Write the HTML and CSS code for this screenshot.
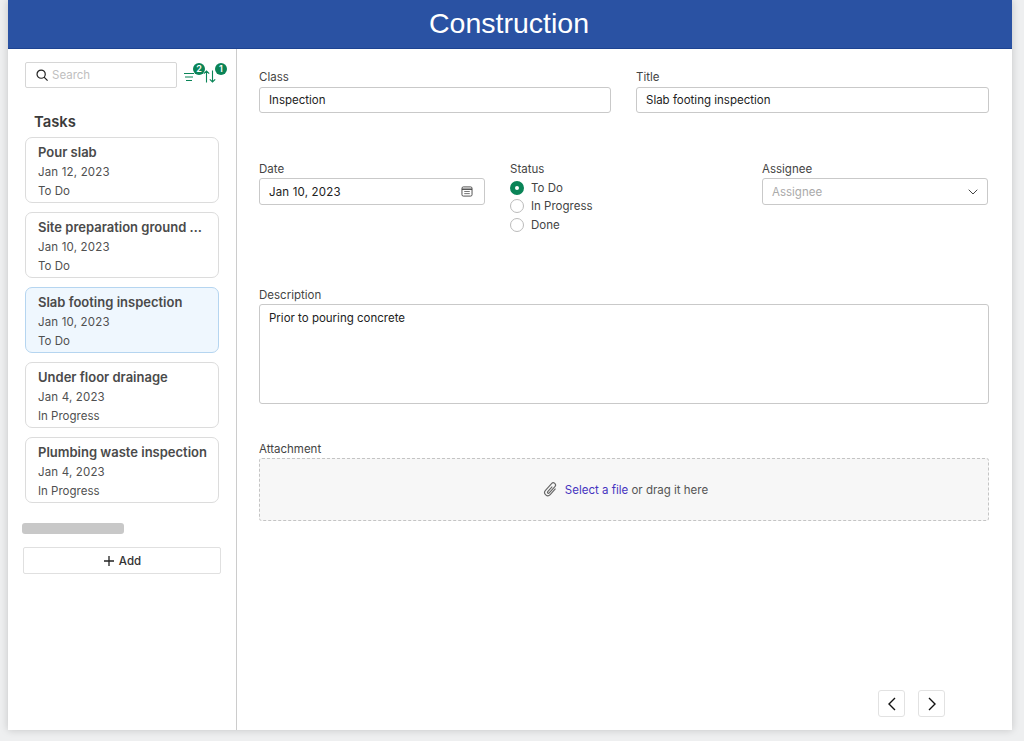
FILE: index.html
```html
<!DOCTYPE html>
<html lang="en">
  <head>
    <meta charset="UTF-8" />
    <title>Construction</title>
    <link rel="stylesheet" href="styles.css">
  </head>
  <body>
    <div class="app">
      <header class="topbar">Construction</header>
      <div class="content">
        <aside class="sidebar">
          <div class="toolbar">
            <div class="search">
              <svg width="12" height="12" viewBox="0 0 14 14" fill="none" stroke="#222" stroke-width="1.400"><circle cx="6" cy="6" r="4.800"/><path d="M9.400 9.400L13.500 13.500"/></svg>
              <span>Search</span>
            </div>
            <div class="tool">
              <svg width="10" height="8" viewBox="0 0 10 8" fill="none" stroke="#0a8457" stroke-width="1"><path d="M0 .5h10M1 4h8M2 7.500h6"/></svg>
              <b class="badge">2</b>
            </div>
            <div class="tool sort">
              <svg width="13" height="13" viewBox="0 0 13 13" fill="none" stroke="#0a8457" stroke-width="1.100"><path d="M3.500 12.500V1M.8 3.700L3.500 1l2.700 2.700M9.500.5V12M6.800 9.300L9.500 12l2.700-2.700"/></svg>
              <b class="badge">1</b>
            </div>
          </div>
          <h2>Tasks</h2>
          <div class="cards">
            <div class="card"><h3>Pour slab</h3><p>Jan 12, 2023</p><p>To Do</p></div>
            <div class="card"><h3>Site preparation ground works</h3><p>Jan 10, 2023</p><p>To Do</p></div>
            <div class="card active"><h3>Slab footing inspection</h3><p>Jan 10, 2023</p><p>To Do</p></div>
            <div class="card"><h3>Under floor drainage</h3><p>Jan 4, 2023</p><p>In Progress</p></div>
            <div class="card"><h3>Plumbing waste inspection</h3><p>Jan 4, 2023</p><p>In Progress</p></div>
          </div>
          <div class="scrollbar"></div>
          <button class="add">
            <svg width="12" height="12" viewBox="0 0 12 12" fill="none" stroke="#222" stroke-width="1.300"><path d="M6 1v10M1 6h10"/></svg>
            Add
          </button>
        </aside>
        <main class="form">
          <div class="row row-two">
            <div class="field"><label>Class</label><div class="input">Inspection</div></div>
            <div class="field"><label>Title</label><div class="input">Slab footing inspection</div></div>
          </div>
          <div class="row row-three">
            <div class="field">
              <label>Date</label>
              <div class="input spread date">
                Jan 10, 2023
                <svg width="12" height="11" viewBox="0 0 13 12" fill="none" stroke="#444"><rect x="1" y="1" width="11" height="10" rx="1.500"/><path d="M1 3.500h11" stroke-width="1.500"/><path d="M3.500 6h6M3.500 8.300h6" stroke-width=".8"/></svg>
              </div>
            </div>
            <div class="field">
              <label>Status</label>
              <div class="radios">
                <div class="radio checked"><i></i>To Do</div>
                <div class="radio"><i></i>In Progress</div>
                <div class="radio"><i></i>Done</div>
              </div>
            </div>
            <div class="field">
              <label>Assignee</label>
              <div class="input spread placeholder">
                Assignee
                <svg width="10" height="6" viewBox="0 0 10 6" fill="none" stroke="#444"><path d="M.7.7L5 5l4.300-4.300"/></svg>
              </div>
            </div>
          </div>
          <div class="field description">
            <label>Description</label>
            <div class="input textarea">Prior to pouring concrete</div>
          </div>
          <div class="field attachment">
            <label>Attachment</label>
            <div class="dropzone">
              <svg width="17" height="17" viewBox="0 0 15 15" fill="none" stroke="#666" stroke-width="1"><path transform="rotate(42 7.500 7.500)" d="M10.300 4v7a2.800 2.800 0 0 1-5.600 0V3a2 2 0 0 1 4 0v7.500a.9.9 0 0 1-1.800 0V4.500"/></svg>
              <span><a>Select a file</a> or drag it here</span>
            </div>
          </div>
          <div class="pager">
            <button><svg width="8" height="14" viewBox="0 0 8 14" fill="none" stroke="#111" stroke-width="1.400"><path d="M7 1L1 7l6 6"/></svg></button>
            <button><svg width="8" height="14" viewBox="0 0 8 14" fill="none" stroke="#111" stroke-width="1.400"><path d="M1 1l6 6-6 6"/></svg></button>
          </div>
        </main>
      </div>
    </div>
  </body>
</html>
```

FILE: styles.css
```css
body {
  margin: 0;
  background: #eeeff0;
  font-family: Inter, "Liberation Sans", sans-serif;
  font-size: 11.5px;
  color: #222;
  height: 741px;
  overflow: hidden;
}

.app {
  width: 1004px;
  height: 730px;
  margin-left: 8px;
  background: #fff;
  display: flex;
  flex-direction: column;
  box-shadow: 0 0 8px rgba(0, 0, 0, 0.18);
}

.topbar {
  height: 49px;
  background: #2a52a3;
  border-bottom: 1px solid #1d4391;
  box-sizing: border-box;
  color: #fff;
  font-family: "Liberation Sans", sans-serif;
  font-size: 28.500px;
  line-height: 47px;
  text-align: center;
  padding-right: 2px;
}

.content {
  flex: 1;
  display: flex;
}

.sidebar {
  width: 229px;
  box-sizing: border-box;
  border-right: 1px solid #ccc;
  padding: 13px 15px 0 14px;
}

.toolbar {
  display: flex;
  align-items: flex-start;
  padding-left: 3px;
}

.search {
  flex-shrink: 0;
  width: 152px;
  height: 26px;
  box-sizing: border-box;
  border: 1px solid #d6d6d6;
  border-radius: 2px;
  display: flex;
  align-items: center;
  gap: 4px;
  padding: 0 0 1px 10px;
  color: #c0c0c0;
}

.tool {
  position: relative;
  flex-shrink: 0;
  height: 26px;
  margin-left: 7px;
  display: flex;
  align-items: center;
}

.tool svg {
  margin-top: 3px;
}

.sort {
  margin-left: 9px;
}

.sort svg {
  margin-top: 2px;
}

.badge {
  position: absolute;
  top: 1px;
  left: 9px;
  width: 12px;
  height: 12px;
  border-radius: 50%;
  background: #0a8457;
  color: #fff;
  font-size: 9px;
  font-weight: 600;
  line-height: 12px;
  text-align: center;
}

.sort .badge {
  left: 12px;
}

.sidebar h2 {
  margin: 25px 0 5px 12px;
  font-size: 14.800px;
  line-height: 19px;
  font-weight: 600;
  color: #3b3b3b;
}

.cards {
  display: flex;
  flex-direction: column;
  gap: 9px;
  margin-left: 3px;
}

.card {
  width: 194px;
  height: 66px;
  box-sizing: border-box;
  border: 1px solid #dcdcdc;
  border-radius: 7px;
  padding: 6px 10px 6px 12px;
  color: #505050;
}

.card.active {
  background: #eff7fe;
  border-color: #b5d5f0;
}

.card h3 {
  margin: 0 0 3px;
  font-size: 13px;
  line-height: 17px;
  font-weight: 600;
  color: #4a4a4a;
  white-space: nowrap;
  overflow: hidden;
  text-overflow: ellipsis;
}

.card p {
  margin: 0 0 3px;
  line-height: 16px;
}

.card p:first-of-type,
.date {
  letter-spacing: 0.17px;
}

.scrollbar {
  width: 102px;
  height: 11px;
  margin-top: 20px;
  border-radius: 3px;
  background: #c8c8c8;
}

.add {
  width: 198px;
  height: 27px;
  margin: 13px 0 0 1px;
  background: #fff;
  border: 1px solid #e0e0e0;
  border-radius: 2px;
  font: 500 11.500px Inter, sans-serif;
  color: #333;
  display: flex;
  align-items: center;
  justify-content: center;
  gap: 4px;
}

.form {
  flex: 1;
  position: relative;
  padding: 20px 23px 0 22px;
}

.row {
  display: grid;
}

.row-two {
  grid-template-columns: 352px 353px;
  column-gap: 25px;
}

.row-three {
  grid-template-columns: 226px 227px 226px;
  column-gap: 25px;
  margin-top: 48px;
  height: 93px;
}

.field label {
  display: block;
  line-height: 16px;
  margin-bottom: 1px;
  color: #444;
}

.row-two label {
  margin-bottom: 2px;
}

.input {
  height: 26px;
  box-sizing: border-box;
  border: 1px solid #c9c9c9;
  border-radius: 3px;
  padding: 0 9px;
  line-height: 24px;
  color: #222;
}

.spread {
  display: flex;
  align-items: center;
  justify-content: space-between;
  padding-right: 9px;
  height: 27px;
}

.date {
  padding-right: 11px;
}

.placeholder {
  color: #aaa;
}

.radios {
  display: flex;
  flex-direction: column;
  gap: 1.500px;
  margin-top: 2px;
}

.radio {
  display: flex;
  align-items: center;
  gap: 7px;
  height: 17px;
  color: #444;
}

.radio i {
  width: 14px;
  height: 14px;
  box-sizing: border-box;
  border: 1px solid #bbb;
  border-radius: 50%;
}

.radio.checked i {
  border: 5px solid #0a8457;
  background: #fff;
}

.description {
  margin-top: 33px;
}

.textarea {
  height: 100px;
  line-height: 26px;
}

.attachment {
  margin-top: 37px;
}

.dropzone {
  height: 63px;
  box-sizing: border-box;
  border: 1px dashed #c4c4c4;
  border-radius: 3px;
  background: #f7f7f7;
  display: flex;
  align-items: center;
  justify-content: center;
  gap: 6px;
  padding-left: 2px;
  color: #555;
}

.dropzone a {
  color: #4634c0;
}

.pager {
  position: absolute;
  right: 67px;
  bottom: 13px;
  display: flex;
  gap: 13px;
}

.pager button {
  width: 27px;
  height: 27px;
  padding: 0;
  background: #fff;
  border: 1px solid #e2e2e2;
  border-radius: 3px;
  display: flex;
  align-items: center;
  justify-content: center;
}
```
